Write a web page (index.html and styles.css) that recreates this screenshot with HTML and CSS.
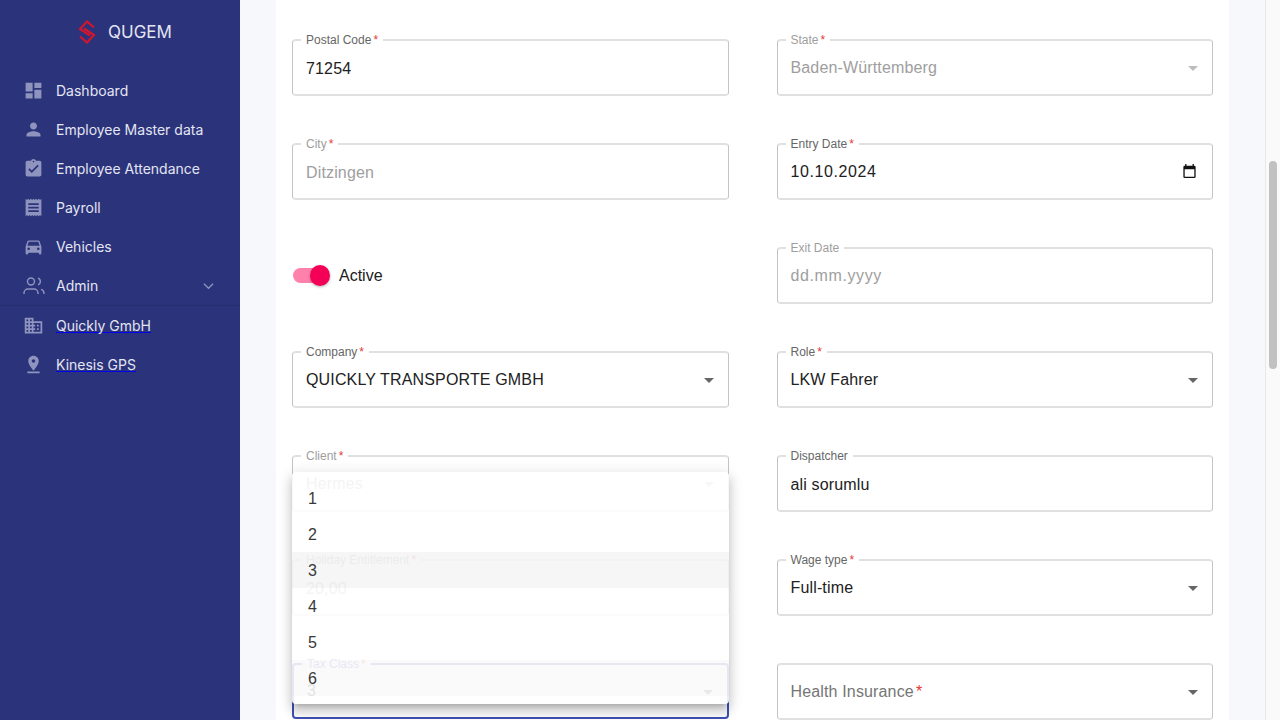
FILE: index.html
```html
<!DOCTYPE html>
<html lang="en">
<head>
    <meta charset="UTF-8">
    <meta name="viewport" content="width=device-width, initial-scale=1.0">
    <title>QUGEM</title>
    <link rel="stylesheet" href="styles.css">
</head>
<body>

    <aside class="sidebar">
        <div class="brand">
            <svg class="brand-logo" viewBox="0 0 18 24" fill="none" stroke="#d3152f" stroke-width="2.2">
                <path d="M16 7.500 9 1.500 2 9 12 15.500"/>
                <path d="M2 16.500 9 22.500 16 15 6 8.500"/>
            </svg>
            <span>QUGEM</span>
        </div>
        <nav class="nav">
            <a class="nav-item"><svg viewBox="0 0 24 24"><path d="M3 13h8V3H3v10zm0 8h8v-6H3v6zm10 0h8V11h-8v10zm0-18v6h8V3h-8z"/></svg><span>Dashboard</span></a>
            <a class="nav-item"><svg viewBox="0 0 24 24"><path d="M12 12c2.21 0 4-1.79 4-4s-1.79-4-4-4-4 1.79-4 4 1.79 4 4 4zm0 2c-2.67 0-8 1.34-8 4v2h16v-2c0-2.66-5.33-4-8-4z"/></svg><span>Employee Master data</span></a>
            <a class="nav-item"><svg viewBox="0 0 24 24"><path d="M19 3h-4.18C14.4 1.84 13.3 1 12 1c-1.3 0-2.4.84-2.82 2H5c-1.1 0-2 .9-2 2v14c0 1.1.9 2 2 2h14c1.1 0 2-.9 2-2V5c0-1.1-.9-2-2-2zm-7 0c.55 0 1 .45 1 1s-.45 1-1 1-1-.45-1-1 .45-1 1-1zm-2 14l-4-4 1.41-1.41L10 14.17l6.59-6.59L18 9l-8 8z"/></svg><span>Employee Attendance</span></a>
            <a class="nav-item"><svg viewBox="0 0 24 24"><path d="M18 17H6v-2h12v2zm0-4H6v-2h12v2zm0-4H6V7h12v2zM3 22l1.5-1.5L6 22l1.5-1.5L9 22l1.5-1.5L12 22l1.5-1.5L15 22l1.5-1.5L18 22l1.5-1.5L21 22V2l-1.5 1.5L18 2l-1.5 1.5L15 2l-1.5 1.5L12 2l-1.5 1.5L9 2 7.5 3.5 6 2 4.5 3.5 3 2v20z"/></svg><span>Payroll</span></a>
            <a class="nav-item"><svg viewBox="0 0 24 24"><path d="M18.92 6.01C18.72 5.42 18.16 5 17.5 5h-11c-.66 0-1.21.42-1.42 1.01L3 12v8c0 .55.45 1 1 1h1c.55 0 1-.45 1-1v-1h12v1c0 .55.45 1 1 1h1c.55 0 1-.45 1-1v-8l-2.08-5.99zM6.5 16c-.83 0-1.5-.67-1.5-1.5S5.67 13 6.5 13s1.5.67 1.5 1.5S7.33 16 6.5 16zm11 0c-.83 0-1.5-.67-1.5-1.5s.67-1.5 1.5-1.5 1.5.67 1.5 1.5-.67 1.5-1.5 1.5zM5 11l1.5-4.5h11L19 11H5z"/></svg><span>Vehicles</span></a>
            <a class="nav-item nav-admin">
                <svg class="icon-line" viewBox="0 0 24 24"><circle cx="9" cy="7.500" r="3.500"/><path d="M2 20v-1a4 4 0 0 1 4-4h6a4 4 0 0 1 4 4v1"/><path d="M16 4.200a3.500 3.500 0 0 1 0 6.600"/><path d="M22 20v-1a4 4 0 0 0-3-3.600"/></svg>
                <span>Admin</span>
                <svg class="chevron" viewBox="0 0 12 8"><path d="M1 1.500 6 6.500 11 1.500"/></svg>
            </a>
            <a class="nav-item nav-link"><svg viewBox="0 0 24 24"><path d="M12 7V3H2v18h20V7H12zM6 19H4v-2h2v2zm0-4H4v-2h2v2zm0-4H4V9h2v2zm0-4H4V5h2v2zm4 12H8v-2h2v2zm0-4H8v-2h2v2zm0-4H8V9h2v2zm0-4H8V5h2v2zm10 12h-8v-2h2v-2h-2v-2h2v-2h-2V9h8v10zm-2-8h-2v2h2v-2zm0 4h-2v2h2v-2z"/></svg><span>Quickly GmbH</span></a>
            <a class="nav-item nav-link"><svg viewBox="0 0 24 24"><path d="M18 8c0-3.310-2.690-6-6-6S6 4.690 6 8c0 4.500 6 11 6 11s6-6.500 6-11zm-8 0c0-1.100.9-2 2-2s2 .9 2 2-.89 2-2 2c-1.100 0-2-.9-2-2zM5 20v2h14v-2H5z"/></svg><span>Kinesis GPS</span></a>
        </nav>
    </aside>

    <main class="main">
        <div class="card">
            <div class="form-grid">

                <div class="field"><label>Postal Code<i>*</i></label><div class="value">71254</div></div>
                <div class="field select disabled"><label>State<i>*</i></label><div class="value">Baden-Württemberg</div><b class="arrow"></b></div>

                <div class="field disabled"><label>City<i>*</i></label><div class="value">Ditzingen</div></div>
                <div class="field date"><label>Entry Date<i>*</i></label><div class="value">10.10.2024</div>
                    <svg class="calendar" viewBox="0 0 14 16"><path d="M3.500 0v2h7V0H12v2h.5A1.500 1.500 0 0 1 14 3.500v11a1.500 1.500 0 0 1-1.500 1.500h-11A1.500 1.500 0 0 1 0 14.500v-11A1.500 1.500 0 0 1 1.500 2H2V0h1.500zM12.500 6h-11v8.500h11V6z"/></svg>
                </div>

                <div class="switch-row">
                    <span class="switch"><span class="switch-track"></span><span class="switch-thumb"></span></span>
                    <span>Active</span>
                </div>
                <div class="field date disabled"><label>Exit Date</label><div class="value">dd.mm.yyyy</div></div>

                <div class="field select"><label>Company<i>*</i></label><div class="value">QUICKLY TRANSPORTE GMBH</div><b class="arrow"></b></div>
                <div class="field select"><label>Role<i>*</i></label><div class="value">LKW Fahrer</div><b class="arrow"></b></div>

                <div class="field select disabled"><label>Client<i>*</i></label><div class="value">Hermes</div><b class="arrow"></b></div>
                <div class="field"><label>Dispatcher</label><div class="value">ali sorumlu</div></div>

                <div class="field disabled"><label>Holiday Entitlement<i>*</i></label><div class="value">20,00</div></div>
                <div class="field select"><label>Wage type<i>*</i></label><div class="value">Full-time</div><b class="arrow"></b></div>

                <div class="field select focused"><label>Tax Class<i>*</i></label><div class="value">3</div><b class="arrow"></b></div>
                <div class="field select empty"><div class="value">Health Insurance<i>*</i></div><b class="arrow"></b></div>

            </div>

            <ul class="menu">
                <li>1</li>
                <li>2</li>
                <li class="selected">3</li>
                <li>4</li>
                <li>5</li>
                <li class="hovered">6</li>
            </ul>
        </div>
    </main>

    <div class="scrollbar"><div class="scroll-thumb"></div></div>

</body>
</html>
```

FILE: styles.css
```css
* {
    box-sizing: border-box;
}
html, body {
    height: 100%;
}
body {
    margin: 0;
    display: flex;
    height: 720px;
    overflow: hidden;
    font-family: "Liberation Sans", Arial, sans-serif;
    background-color: #f7f8fc;
    color: #212121;
}

/* sidebar */
.sidebar {
    width: 240px;
    flex-shrink: 0;
    background-color: #2b337a;
    color: #e3e5f3;
    font-family: Inter, sans-serif;
}
.brand {
    display: flex;
    align-items: center;
    justify-content: center;
    gap: 12px;
    height: 64px;
    padding-left: 10px;
    font-size: 17px;
}
.brand-logo {
    width: 18px;
    height: 24px;
}
.nav {
    padding-top: 7px;
}
.nav-item {
    display: flex;
    align-items: center;
    gap: 12px;
    height: 39px;
    padding-left: 23px;
    font-size: 14px;
}
.nav-item svg {
    width: 21px;
    height: 21px;
    fill: #8f94bf;
    flex-shrink: 0;
}
.nav-item .icon-line {
    width: 24px;
    height: 24px;
    margin-left: -1px;
    margin-right: -2px;
    fill: none;
    stroke: #8f94bf;
    stroke-width: 1.4;
}
.nav-item .chevron {
    width: 11px;
    height: 8px;
    margin-left: auto;
    margin-right: 26px;
    fill: none;
    stroke: #8f94bf;
    stroke-width: 1.4;
}
.nav-admin {
    border-bottom: 1px solid #272e70;
    height: 40px;
}
.nav-link span {
    line-height: 13px;
    border-bottom: 1px solid #0000ee;
}

/* form */
.main {
    flex: 1;
    padding: 0 36px;
}
.card {
    position: relative;
    height: 720px;
    padding: 39px 16px 0;
    background-color: #fff;
}
.form-grid {
    display: grid;
    grid-template-columns: 1fr 1fr;
    column-gap: 48px;
    row-gap: 47px;
}
.field {
    position: relative;
    display: flex;
    align-items: center;
    height: 57px;
    padding: 0 13px;
    border: 1px solid #c4c4c4;
    border-top-width: 2px;
    border-top-color: #e0e0e0;
    border-bottom-width: 2px;
    border-bottom-color: #e0e0e0;
    border-radius: 4px;
    font-size: 16px;
}
.field label {
    position: absolute;
    top: -9px;
    left: 8px;
    padding: 0 5px;
    background-color: #fff;
    font-size: 12px;
    line-height: 16px;
    color: #666;
}
.field i {
    margin-left: 2px;
    font-style: normal;
    color: #e53935;
}
.value {
    letter-spacing: 0.15px;
    margin-top: 3px;
}
.select .value {
    margin-top: 0;
}
.date .value {
    letter-spacing: 0.6px;
    margin-top: 0;
}
.disabled .value {
    color: #9e9e9e;
}
.disabled label {
    color: #9e9e9e;
}
.empty .value {
    color: #757575;
}
.focused {
    height: 56px;
    border: 2px solid #3f51b5;
}
.focused label {
    color: #3f51b5;
}
.arrow {
    position: absolute;
    top: 25px;
    right: 14px;
    border-left: 5.5px solid transparent;
    border-right: 5.5px solid transparent;
    border-top: 5.5px solid #666;
}
.disabled .arrow {
    border-top-color: #bdbdbd;
}
.calendar {
    position: absolute;
    top: 19px;
    right: 16px;
    width: 13px;
    height: 14px;
    fill: #111;
}
.switch-row {
    display: flex;
    align-items: center;
    gap: 9px;
    height: 57px;
    font-size: 16px;
}
.switch {
    position: relative;
    width: 38px;
    height: 21px;
}
.switch-track {
    position: absolute;
    top: 3px;
    left: 1px;
    width: 34px;
    height: 15px;
    border-radius: 8px;
    background-color: #ff80ab;
}
.switch-thumb {
    position: absolute;
    top: 0;
    right: 0;
    width: 20px;
    height: 21px;
    border-radius: 50%;
    background-color: #f50057;
    box-shadow: 0 1px 3px rgba(0, 0, 0, 0.3);
}

/* open dropdown, sits over the form */
.menu {
    position: absolute;
    top: 472px;
    left: 16px;
    width: 437px;
    margin: 0;
    padding: 8px 0;
    list-style: none;
    background-color: #fff;
    border-radius: 4px;
    box-shadow: 0 5px 5px -3px rgba(0, 0, 0, 0.2), 0 8px 10px 1px rgba(0, 0, 0, 0.14), 0 3px 14px 2px rgba(0, 0, 0, 0.12);
    opacity: 0.89;
    font-size: 16px;
}
.menu li {
    height: 36px;
    padding: 0 16px;
    line-height: 38px;
}
.menu .selected {
    background-color: #f5f5f5;
}
.menu .hovered {
    background-color: #fafafa;
}

/* page scrollbar */
.scrollbar {
    width: 15px;
    flex-shrink: 0;
    background-color: #fafafa;
    border-left: 1px solid #e8e8e8;
}
.scroll-thumb {
    width: 8px;
    height: 208px;
    margin: 161px 0 0 3px;
    border-radius: 4px;
    background-color: #c1c1c1;
}
```
